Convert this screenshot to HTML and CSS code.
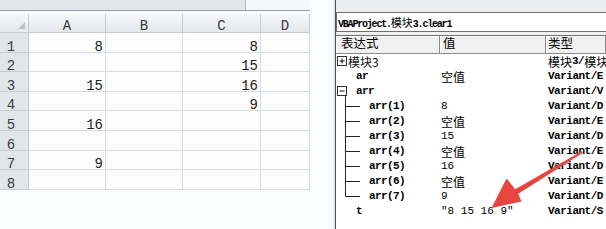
FILE: index.html
```html
<!DOCTYPE html>
<html lang="zh-CN">
<head>
<meta charset="utf-8">
<title>Excel VBA watch</title>
<link rel="stylesheet" href="styles.css">
</head>
<body>
<div class="screen">
  <section class="sheet">
    <div class="fbar"><div class="fbar-left"></div><div class="fbar-right"></div></div>
    <div class="grid">
      <div class="hd corner"><span class="tri"></span></div>
      <div class="hd">A</div><div class="hd">B</div><div class="hd">C</div><div class="hd">D</div>

      <div class="hd rowh">1</div><div class="c">8</div><div class="c"></div><div class="c">8</div><div class="c"></div>
      <div class="hd rowh">2</div><div class="c"></div><div class="c"></div><div class="c">15</div><div class="c"></div>
      <div class="hd rowh">3</div><div class="c">15</div><div class="c"></div><div class="c">16</div><div class="c"></div>
      <div class="hd rowh">4</div><div class="c"></div><div class="c"></div><div class="c">9</div><div class="c"></div>
      <div class="hd rowh">5</div><div class="c">16</div><div class="c"></div><div class="c"></div><div class="c"></div>
      <div class="hd rowh">6</div><div class="c"></div><div class="c"></div><div class="c"></div><div class="c"></div>
      <div class="hd rowh">7</div><div class="c">9</div><div class="c"></div><div class="c"></div><div class="c"></div>
      <div class="hd rowh">8</div><div class="c"></div><div class="c"></div><div class="c"></div><div class="c"></div>
    </div>
  </section>

  <section class="vba">
    <div class="vwin">
      <div class="vtop"></div>
      <div class="title">VBAProject.<span class="cjk">模块</span>3.clear1</div>
      <div class="vgap"></div>
      <div class="list">
        <div class="lhead"><div class="h1">表达式</div><div class="h2">值</div><div class="h3">类型</div></div>

        <div class="lrow">
          <div class="expr"><svg class="box" width="10" height="15" viewBox="0 0 10 15"><rect x="0.5" y="2.5" width="9" height="9" fill="#fff" stroke="#333"/><path d="M2.5 7h5M5 4.5v5" stroke="#111"/></svg><span class="cjk name-top">模块3</span></div>
          <div class="val"></div>
          <div class="typ"><span class="cjk">模块</span><span>3/</span><span class="cjk">模块</span></div>
        </div>
        <div class="lrow">
          <div class="expr"><span class="name lvl1">ar</span></div>
          <div class="val"><span class="cjk">空值</span></div>
          <div class="typ">Variant/E</div>
        </div>
        <div class="lrow">
          <div class="expr"><svg class="box" width="10" height="15" viewBox="0 0 10 15"><rect x="0.5" y="2.5" width="9" height="9" fill="#fff" stroke="#333"/><path d="M2.5 7h5" stroke="#111"/><path d="M8.5 11.5V15" stroke="#222"/></svg><span class="name lvl1b">arr</span></div>
          <div class="val"></div>
          <div class="typ">Variant/V</div>
        </div>
        <div class="lrow">
          <div class="expr"><svg class="branch" width="16" height="15" viewBox="0 0 16 15"><path d="M0.5 0V15M0.5 7.5H15" stroke="#222"/></svg><span class="name">arr(1)</span></div>
          <div class="val">8</div>
          <div class="typ">Variant/D</div>
        </div>
        <div class="lrow">
          <div class="expr"><svg class="branch" width="16" height="15" viewBox="0 0 16 15"><path d="M0.5 0V15M0.5 7.5H15" stroke="#222"/></svg><span class="name">arr(2)</span></div>
          <div class="val"><span class="cjk">空值</span></div>
          <div class="typ">Variant/E</div>
        </div>
        <div class="lrow">
          <div class="expr"><svg class="branch" width="16" height="15" viewBox="0 0 16 15"><path d="M0.5 0V15M0.5 7.5H15" stroke="#222"/></svg><span class="name">arr(3)</span></div>
          <div class="val">15</div>
          <div class="typ">Variant/D</div>
        </div>
        <div class="lrow">
          <div class="expr"><svg class="branch" width="16" height="15" viewBox="0 0 16 15"><path d="M0.5 0V15M0.5 7.5H15" stroke="#222"/></svg><span class="name">arr(4)</span></div>
          <div class="val"><span class="cjk">空值</span></div>
          <div class="typ">Variant/E</div>
        </div>
        <div class="lrow">
          <div class="expr"><svg class="branch" width="16" height="15" viewBox="0 0 16 15"><path d="M0.5 0V15M0.5 7.5H15" stroke="#222"/></svg><span class="name">arr(5)</span></div>
          <div class="val">16</div>
          <div class="typ">Variant/D</div>
        </div>
        <div class="lrow">
          <div class="expr"><svg class="branch" width="16" height="15" viewBox="0 0 16 15"><path d="M0.5 0V15M0.5 7.5H15" stroke="#222"/></svg><span class="name">arr(6)</span></div>
          <div class="val"><span class="cjk">空值</span></div>
          <div class="typ">Variant/E</div>
        </div>
        <div class="lrow">
          <div class="expr"><svg class="branch" width="16" height="15" viewBox="0 0 16 15"><path d="M0.5 0V7.5H15" stroke="#222" fill="none"/></svg><span class="name">arr(7)</span></div>
          <div class="val">9</div>
          <div class="typ">Variant/D</div>
        </div>
        <div class="lrow">
          <div class="expr"><span class="name lvl1">t</span></div>
          <div class="val">"8 15 16 9"</div>
          <div class="typ">Variant/S</div>
        </div>
      </div>
    </div>
  </section>

  <svg class="arrow" width="606" height="229" viewBox="0 0 606 229">
    <polygon points="491.5,208 506.5,178.5 515.2,189.2 581.6,151.2 582.6,153 518.2,193.8 521.5,201.5" fill="#e6463f"/>
  </svg>
</div>
</body>
</html>
```

FILE: styles.css
```css
html, body {
  margin: 0;
  padding: 0;
}

body {
  width: 606px;
  height: 229px;
  overflow: hidden;
  background: #ffffff;
  font-family: "Liberation Mono", "DejaVu Sans Mono", monospace;
  color: #111;
}

.screen {
  position: relative;
  display: flex;
  width: 606px;
  height: 229px;
}

/* ---------- spreadsheet ---------- */
.sheet {
  width: 333px;
  flex: none;
  background: #fbfcfe;
}

.fbar {
  display: flex;
  width: 310px;
  height: 10px;
  border-bottom: 1px solid #9aa0a8;
}

.fbar-left {
  width: 245px;
  background: #e3e6ea;
  border-right: 1px solid #b3b8be;
}

.fbar-right {
  flex: 1;
  background: #f4f6f8;
}

.grid {
  margin-top: 3px;
  width: 310px;
  display: grid;
  grid-template-columns: 29px 77px 77px 78px 49px;
  grid-template-rows: 19px repeat(8, 19.6px);
}

.hd {
  box-sizing: border-box;
  display: flex;
  justify-content: center;
  align-items: flex-end;
  background: linear-gradient(#f6f7f9, #e4e7eb);
  border-right: 1px solid #c5cbd2;
  border-bottom: 1px solid #c5cbd2;
  color: #3a3a3a;
  font-size: 14px;
  line-height: 10px;
  padding-bottom: 1px;
}

.corner {
  justify-content: flex-end;
  padding: 0 3px 3px 0;
}

.tri {
  width: 0;
  height: 0;
  border-left: 7px solid transparent;
  border-bottom: 7px solid #bcc1c8;
}

.rowh {
  background: #e2e6eb;
  padding-right: 6px;
  padding-bottom: 0;
}

.c {
  box-sizing: border-box;
  display: flex;
  justify-content: flex-end;
  align-items: flex-end;
  background: #fdfdfe;
  border-right: 1px solid #d8dbe0;
  border-bottom: 1px solid #d8dbe0;
  padding-right: 2px;
  font-size: 14px;
  line-height: 10px;
  color: #1c1c1c;
}

/* ---------- VBA watch window ---------- */
.vba {
  flex: 1;
  display: flex;
  min-width: 0;
  padding-left: 2px;
  background: #eceef0;
}

.vwin {
  flex: 1;
  min-width: 0;
  display: flex;
  flex-direction: column;
  border-left: 1px solid #4a4a4a;
  background: #f0f0f0;
}

.vtop {
  height: 12px;
  background: #ebedef;
}

.title {
  box-sizing: border-box;
  height: 20px;
  border: 1px solid #6f6f6f;
  border-right: none;
  background: #ffffff;
  padding-left: 1px;
  font-size: 10px;
  font-weight: bold;
  letter-spacing: -1.2px;
  line-height: 18px;
  white-space: nowrap;
  color: #000;
}

.title .cjk {
  font-size: 11px;
  font-weight: normal;
  letter-spacing: 0;
}

.cjk {
  font-family: "Noto Sans CJK SC", "Noto Sans CJK JP", sans-serif;
}

.vgap {
  height: 3px;
}

.list {
  flex: 1;
  background: #ffffff;
  border-top: 1px solid #707070;
}

.lhead,
.lrow {
  display: grid;
  grid-template-columns: 104px 106px 1fr;
}

.lhead {
  height: 18px;
}

.lhead > div {
  box-sizing: border-box;
  background: #f0f0f0;
  border-right: 1px solid #8a8a8a;
  border-bottom: 1px solid #8a8a8a;
  box-shadow: inset 1px 1px #ffffff;
  font-family: "Noto Sans CJK SC", "Noto Sans CJK JP", sans-serif;
  font-size: 12.5px;
  line-height: 14px;
  color: #000;
  white-space: nowrap;
}

.h1 { padding-left: 5px; }
.h2 { padding-left: 3px; }
.h3 { padding-left: 2px; }

.lrow {
  grid-template-rows: 15px;
  height: 15px;
  line-height: 15px;
  white-space: nowrap;
}

.lrow > div {
  display: flex;
  align-items: center;
  height: 15px;
}

.expr {
  font-size: 11px;
  font-weight: bold;
  letter-spacing: -0.6px;
}

.box {
  display: block;
  flex: none;
  margin-left: 1px;
}

.branch {
  display: block;
  flex: none;
  margin-left: 9px;
}

.name {
  margin-left: 8px;
  color: #000;
}

.name-top {
  margin-left: 1px;
  font-size: 12px;
  font-weight: normal;
  letter-spacing: 0;
}

.lvl1 {
  margin-left: 20px;
}

.lvl1b {
  margin-left: 9px;
}

.val {
  padding-left: 1px;
  font-size: 11px;
  color: #000;
}

.val .cjk {
  font-size: 12px;
}

.typ {
  padding-left: 2px;
  font-size: 11px;
  font-weight: bold;
  letter-spacing: -0.5px;
  color: #000;
}

.typ .cjk {
  font-size: 12px;
  font-weight: normal;
  letter-spacing: 0;
}

/* ---------- annotation arrow ---------- */
.arrow {
  position: absolute;
  left: 0;
  top: 0;
  pointer-events: none;
}
```
